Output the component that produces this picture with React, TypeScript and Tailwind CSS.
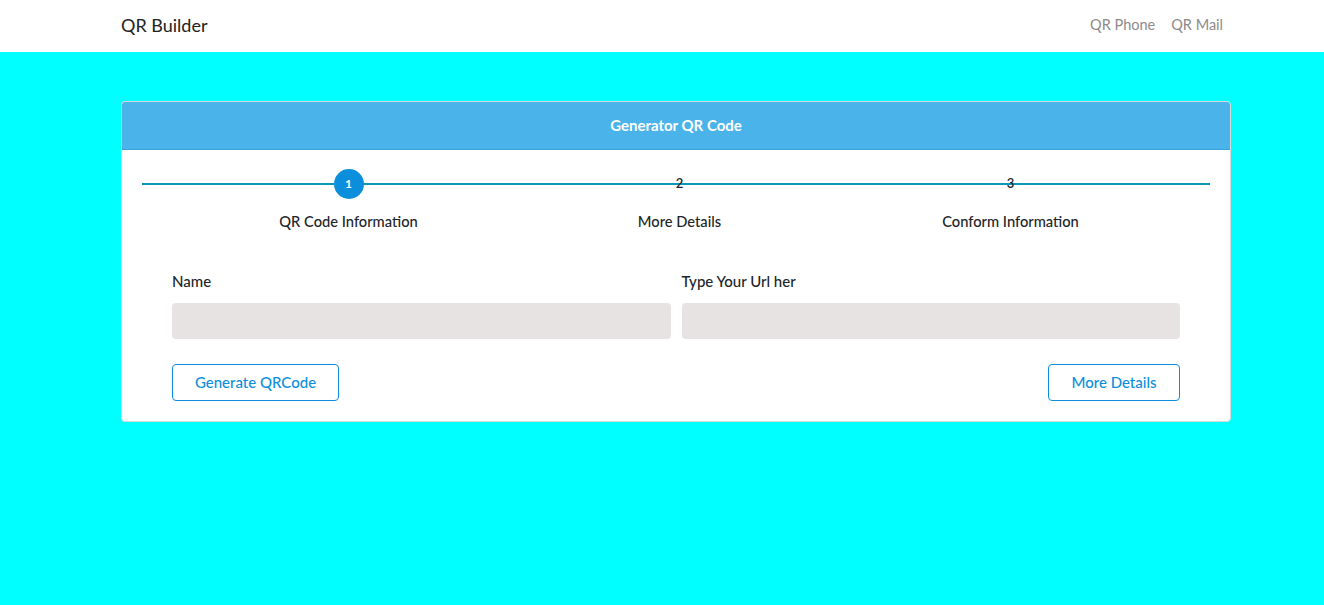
import { useState } from 'react';

const steps = [
    { n: 1, label: 'QR Code Information' },
    { n: 2, label: 'More Details' },
    { n: 3, label: 'Conform Information' },
];

function Stepper({ active }: { active: number }) {
    return (
        <div className="relative px-[20px] pt-[19px]">
            <div className="absolute left-[20px] right-[20px] top-[33px] h-[2px] bg-[#0b98b8]" />
            <div className="relative ml-[41px] grid grid-cols-[331px_331px_331px]">
                {steps.map((s) => (
                    <div key={s.n} className="flex flex-col items-center">
                        {s.n === active ? (
                            <div className="flex h-[30px] w-[30px] items-center justify-center rounded-full bg-[#0b8fdc] text-[12px] font-bold text-white">
                                {s.n}
                            </div>
                        ) : (
                            <div className="flex h-[30px] items-center justify-center text-[13px] font-semibold text-[#212529]">
                                {s.n}
                            </div>
                        )}
                        <span className="mt-[11px] text-[14.7px] font-medium text-[#212529]">
                            {s.label}
                        </span>
                    </div>
                ))}
            </div>
        </div>
    );
}

export default function App() {
    const [name, setName] = useState('');
    const [url, setUrl] = useState('');

    return (
        <div className="min-h-[605px] bg-[#00ffff] font-['Lato',sans-serif] text-[#212529]">
            <nav className="flex h-[52px] items-center justify-between bg-white pl-[121px] pr-[101px]">
                <span className="-mt-[2px] text-[18px] text-[#222]">QR Builder</span>
                <div className="-mt-[2px] flex gap-[16px] text-[14.5px] text-[#8e8a8a]">
                    <a href="#">QR Phone</a>
                    <a href="#">QR Mail</a>
                </div>
            </nav>

            <div className="pt-[49px] pl-[121px]">
                <div className="w-[1110px] overflow-hidden rounded-[4px] border border-[#d9d9d9] bg-white">
                    <div className="flex h-[48px] items-center justify-center border-b border-[#3aa3db] bg-[#4ab3ea] text-[15px] font-bold text-white">
                        Generator QR Code
                    </div>

                    <Stepper active={1} />

                    <div className="px-[50px] pt-[38px] pb-[20px]">
                        <div className="grid grid-cols-2 gap-[11px]">
                            <label className="flex flex-col">
                                <span className="text-[15px] font-medium">Name</span>
                                <input
                                    value={name}
                                    onChange={(e) => setName(e.target.value)}
                                    className="mt-[10px] h-[36px] rounded-[4px] bg-[#e7e3e2] px-3 outline-none"
                                />
                            </label>
                            <label className="flex flex-col">
                                <span className="text-[15px] font-medium">Type Your Url her</span>
                                <input
                                    value={url}
                                    onChange={(e) => setUrl(e.target.value)}
                                    className="mt-[10px] h-[36px] rounded-[4px] bg-[#e7e3e2] px-3 outline-none"
                                />
                            </label>
                        </div>

                        <div className="mt-[25px] flex justify-between">
                            <button className="h-[37px] w-[167px] rounded-[4px] border border-[#0b8fdc] text-[15px] font-medium text-[#0b8fdc]">
                                Generate QRCode
                            </button>
                            <button className="h-[37px] w-[132px] rounded-[4px] border border-[#0b8fdc] text-[15px] font-medium text-[#0b8fdc]">
                                More Details
                            </button>
                        </div>
                    </div>
                </div>
            </div>
        </div>
    );
}
